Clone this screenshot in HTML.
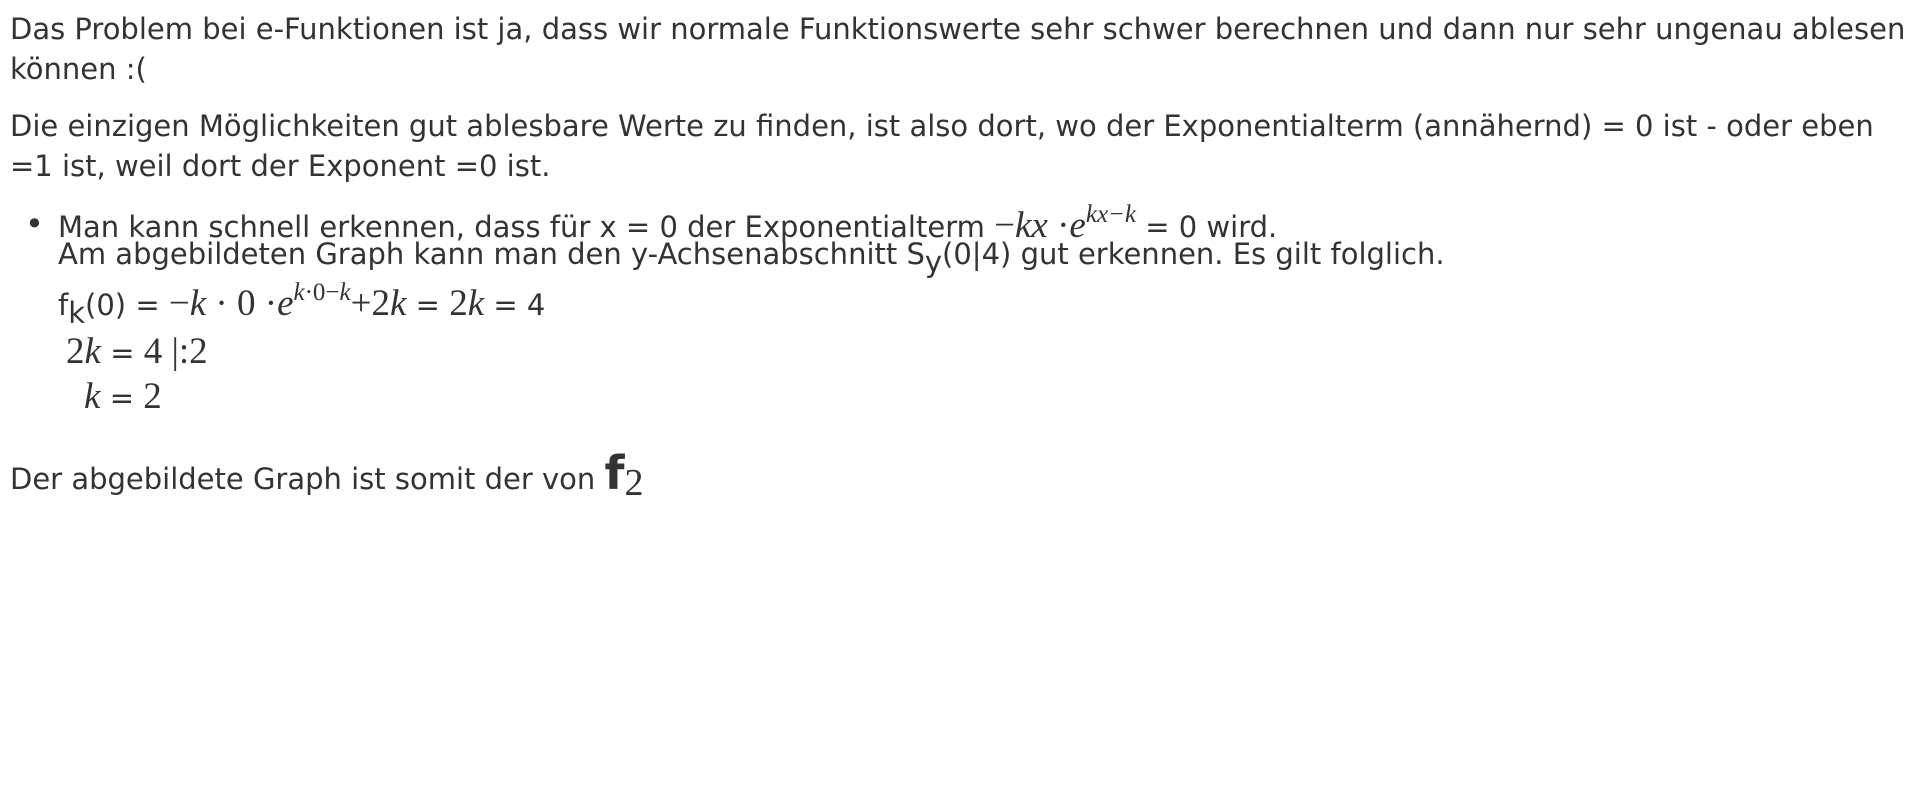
<!DOCTYPE html>
<html><head><meta charset="utf-8"><style>
body{margin:0;background:#fff;color:#333;font-family:"DejaVu Sans","Liberation Sans",sans-serif;font-size:29px;}
.l{position:absolute;white-space:nowrap;left:10px;line-height:1;}
.m{font-family:"Liberation Serif",serif;font-size:37px;}
.i{font-style:italic;}
.s{margin:0 4px;}
sup{font-size:25px;vertical-align:0;position:relative;top:-15px;}
</style></head><body>
<div class="l" style="top:15px">Das Problem bei e-Funktionen ist ja, dass wir normale Funktionswerte sehr schwer berechnen und dann nur sehr ungenau ablesen</div>
<div class="l" style="top:55px">können :(</div>
<div class="l" style="top:112px">Die einzigen Möglichkeiten gut ablesbare Werte zu finden, ist also dort, wo der Exponentialterm (annähernd) = 0 ist - oder eben</div>
<div class="l" style="top:152px">=1 ist, weil dort der Exponent =0 ist.</div>
<div class="l" style="top:208px;left:25px;font-size:32px">•</div>
<div class="l" style="top:207px;left:58px">Man kann schnell erkennen, dass für x = 0 der Exponentialterm <span class="m">−<span class="i">kx</span> ·<span class="i">e</span><sup class="i">kx−k</sup></span> = 0 wird.</div>
<div class="l" style="top:240px;left:58px">Am abgebildeten Graph kann man den y-Achsenabschnitt S<sub style="font-size:29px;vertical-align:-8px">y</sub>(0|4) gut erkennen. Es gilt folglich.</div>
<div class="l" style="top:285px;left:58px">f<sub style="font-size:29px;vertical-align:-8px">k</sub>(0) = <span class="m">−<span class="i">k</span> · 0 ·<span class="i">e</span><sup><span class="i">k</span>·0−<span class="i">k</span></sup>+2<span class="i">k</span></span> = <span class="m">2<span class="i">k</span></span> = 4</div>
<div class="l m" style="top:333px;left:66px">2<span class="i">k</span> <span style="font-family:'DejaVu Sans';font-size:29px">=</span> 4 |:2</div>
<div class="l m" style="top:378px;left:84px"><span class="i">k</span> <span style="font-family:'DejaVu Sans';font-size:29px">=</span> 2</div>
<div class="l" style="top:450px">Der abgebildete Graph ist somit der von <b style="font-size:46px">f</b><span class="m" style="font-size:38px;position:relative;top:6px">2</span></div>
</body></html>
